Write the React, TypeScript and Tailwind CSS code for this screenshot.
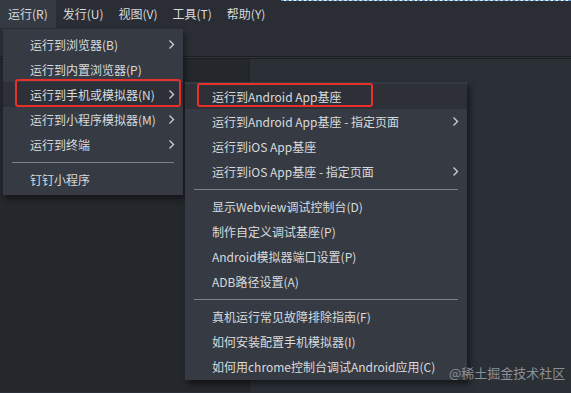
import React from "react";

type Item =
  | { sep: true }
  | { label: string; arrow?: boolean; active?: boolean; boxed?: boolean };

const topMenus = ["运行(R)", "发行(U)", "视图(V)", "工具(T)", "帮助(Y)"];

const runMenu: Item[] = [
  { label: "运行到浏览器(B)", arrow: true },
  { label: "运行到内置浏览器(P)" },
  { label: "运行到手机或模拟器(N)", arrow: true, active: true, boxed: true },
  { label: "运行到小程序模拟器(M)", arrow: true },
  { label: "运行到终端", arrow: true },
  { sep: true },
  { label: "钉钉小程序" },
];

const deviceMenu: Item[] = [
  { label: "运行到Android App基座", active: true, boxed: true },
  { label: "运行到Android App基座 - 指定页面", arrow: true },
  { label: "运行到iOS App基座" },
  { label: "运行到iOS App基座 - 指定页面", arrow: true },
  { sep: true },
  { label: "显示Webview调试控制台(D)" },
  { label: "制作自定义调试基座(P)" },
  { label: "Android模拟器端口设置(P)" },
  { label: "ADB路径设置(A)" },
  { sep: true },
  { label: "真机运行常见故障排除指南(F)" },
  { label: "如何安装配置手机模拟器(I)" },
  { label: "如何用chrome控制台调试Android应用(C)" },
];

function Chevron() {
  return (
    <svg width="7" height="11" viewBox="0 0 7 11" className="shrink-0">
      <polyline points="1.5,1.5 5.5,5.5 1.5,9.5" fill="none" stroke="#c9ccd1" strokeWidth="1.4" />
    </svg>
  );
}

function MenuRows({ items, box }: { items: Item[]; box: string }) {
  return (
    <>
      {items.map((item, i) =>
        "sep" in item ? (
          <div key={i} className="flex h-[10px] items-center px-[9px]">
            <div className="h-px w-full bg-[#7d828a]" />
          </div>
        ) : (
          <div
            key={i}
            className={`relative flex h-[25px] items-center justify-between pl-[27px] pr-[8px] ${
              item.active ? "bg-[#2d3137]" : ""
            }`}
          >
            <span className="whitespace-nowrap">{item.label}</span>
            {item.arrow ? <Chevron /> : null}
            {item.boxed ? <div className={`absolute rounded-[3px] border-[2.5px] border-[#e8302a] ${box}`} /> : null}
          </div>
        )
      )}
    </>
  );
}

export default function App() {
  return (
    <div className="relative h-[393px] w-[571px] overflow-hidden bg-[#2b2f36] font-['Noto_Sans_CJK_SC','Microsoft_YaHei',sans-serif] text-[12px] text-[#d8dadd]">
      <div className="flex h-[28px] bg-[#2a2d33]">
        {topMenus.map((m, i) => (
          <div
            key={m}
            className={`flex shrink-0 items-center whitespace-nowrap pl-[7px] pr-[8px] ${
              i === 0 ? "bg-[#363b43] pl-[8px] pr-[7px]" : ""
            }`}
          >
            {m}
          </div>
        ))}
        <div className="ml-auto h-px w-[290px] border-t border-dashed border-[#5d9ad6] bg-white" />
      </div>

      <div className="h-[29px] border-b border-[#1c1e22] bg-[#2b2e34]" />
      <div className="h-[2px] border-b border-[#1c1e22] bg-[#30343a]" />

      <div className="flex h-[333px]">
        <div className="w-[250px] border-r border-[#1f2226] bg-[#24272c]" />
        <div className="flex-1 bg-[#2b2f36]" />
      </div>

      <div className="absolute left-[3px] top-[29px] w-[180px] bg-[#363b43] py-[3px] shadow-[2px_4px_6px_rgba(0,0,0,0.45)]">
        <MenuRows items={runMenu} box="-top-[3px] bottom-0 left-[12px] right-[2px]" />
      </div>

      <div className="absolute left-[185px] top-[82px] w-[282px] bg-[#363b43] pb-[1px] pt-[2px] shadow-[3px_4px_6px_rgba(0,0,0,0.5)]">
        <MenuRows items={deviceMenu} box="-top-[1px] bottom-[2px] left-[12px] w-[176px]" />
      </div>

      <div className="absolute left-[449px] top-[363px] text-[13px] text-[#8c9096]">@稀土掘金技术社区</div>
    </div>
  );
}
